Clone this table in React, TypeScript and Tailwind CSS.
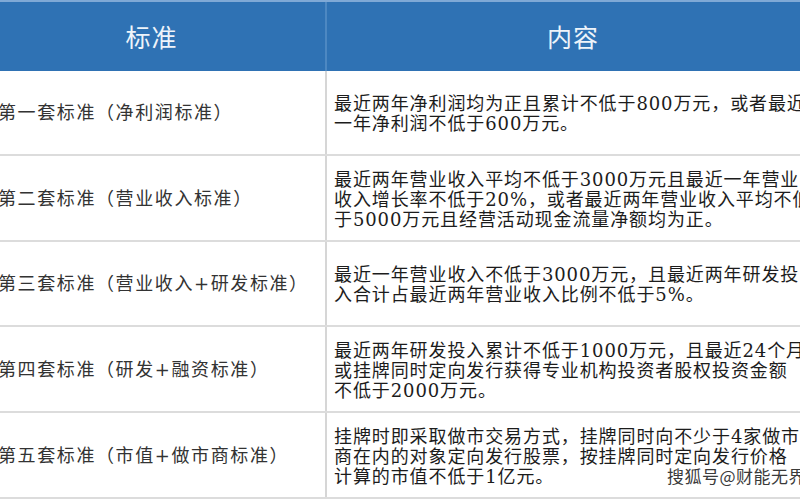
import React from "react";

const rows: { left: string; lines: string[]; h: string }[] = [
  {
    left: "第一套标准（净利润标准）",
    lines: ["最近两年净利润均为正且累计不低于800万元，或者最近", "一年净利润不低于600万元。"],
    h: "h-[85px]",
  },
  {
    left: "第二套标准（营业收入标准）",
    lines: [
      "最近两年营业收入平均不低于3000万元且最近一年营业",
      "收入增长率不低于20%，或者最近两年营业收入平均不低",
      "于5000万元且经营活动现金流量净额均为正。",
    ],
    h: "h-[86px]",
  },
  {
    left: "第三套标准（营业收入+研发标准）",
    lines: ["最近一年营业收入不低于3000万元，且最近两年研发投", "入合计占最近两年营业收入比例不低于5%。"],
    h: "h-[85px]",
  },
  {
    left: "第四套标准（研发+融资标准）",
    lines: [
      "最近两年研发投入累计不低于1000万元，且最近24个月",
      "或挂牌同时定向发行获得专业机构投资者股权投资金额",
      "不低于2000万元。",
    ],
    h: "h-[86px]",
  },
  {
    left: "第五套标准（市值+做市商标准）",
    lines: [
      "挂牌时即采取做市交易方式，挂牌同时向不少于4家做市",
      "商在内的对象定向发行股票，按挂牌同时定向发行价格",
      "计算的市值不低于1亿元。",
    ],
    h: "h-[86px]",
  },
];

export default function App() {
  return (
    <div className="relative w-[800px] h-[500px] overflow-hidden bg-white">
      <div className="ml-[-22px] w-[841px] flex flex-col">
        <div className="flex h-[71px] bg-[#2f72b4] border-t-2 border-[#7fa9d6]">
          <div
            className="w-[349px] flex items-center justify-center border-r-2 border-[#4d88c2] text-[25px] text-[#eef4fa] tracking-[1px]"
            style={{ fontFamily: '"Noto Sans CJK SC", "Noto Sans", sans-serif' }}
          >
            标准
          </div>
          <div
            className="flex-1 flex items-center justify-center text-[25px] text-[#eef4fa] tracking-[1px]"
            style={{ fontFamily: '"Noto Sans CJK SC", "Noto Sans", sans-serif' }}
          >
            内容
          </div>
        </div>
        {rows.map((r, i) => (
          <div key={i} className={`flex ${r.h} border-b-2 border-[#dcdcdc]`}>
            <div
              className="w-[349px] flex items-center pl-[20px] border-r-2 border-[#d6d6d6] text-[18px] tracking-[1.6px] text-[#333333] whitespace-nowrap"
              style={{ fontFamily: '"DejaVu Serif", "Noto Sans CJK SC", serif' }}
            >
              {r.left}
            </div>
            <div
              className="flex-1 flex flex-col justify-center pl-[7px] pt-[3px] text-[18px] leading-[20px] tracking-[0.9px] text-[#1c1c1c] overflow-hidden"
              style={{ fontFamily: '"DejaVu Serif", "Noto Sans CJK SC", serif' }}
            >
              {r.lines.map((l, j) => (
                <div key={j} className="whitespace-nowrap">
                  {l}
                </div>
              ))}
            </div>
          </div>
        ))}
      </div>
      <div
        className="absolute left-[667px] top-[465px] text-[17px] leading-[22px] text-[#3a3a3a] whitespace-nowrap tracking-[0.5px]"
        style={{
          fontFamily: '"Noto Sans CJK SC", "Noto Sans", sans-serif',
          textShadow: "0 0 2px #ffffff, 0 0 2px #ffffff",
        }}
      >
        搜狐号@财能无界
      </div>
    </div>
  );
}
